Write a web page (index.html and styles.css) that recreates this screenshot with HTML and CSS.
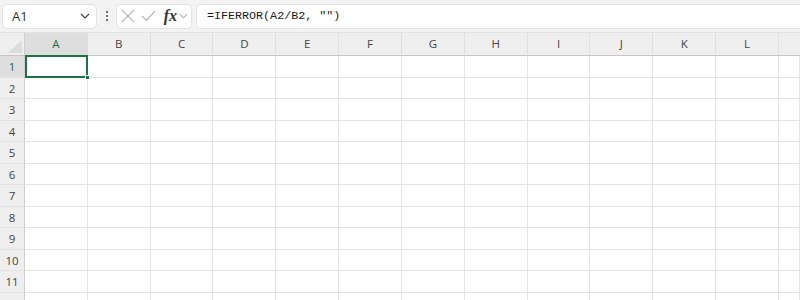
FILE: index.html
```html
<!DOCTYPE html>
<html lang="en">
<head>
    <meta charset="UTF-8">
    <title>Sheet</title>
    <link rel="stylesheet" href="styles.css">
</head>
<body>
    <div class="topbar">
        <div class="namebox">
            <span class="cellref">A1</span>
            <svg class="chev" width="10" height="6" viewBox="0 0 10 6"><path d="M1 1 L5 5 L9 1" fill="none" stroke="#444" stroke-width="1.2"/></svg>
        </div>
        <div class="dots"><i></i><i></i><i></i></div>
        <div class="fxbox">
            <svg width="14" height="14" viewBox="0 0 14 14"><path d="M1 1 L13 13 M13 1 L1 13" stroke="#b3b3b3" stroke-width="1.2"/></svg>
            <svg width="15" height="12" viewBox="0 0 15 12"><path d="M1 6 L5.5 10.5 L14 1" fill="none" stroke="#b3b3b3" stroke-width="1.2"/></svg>
            <span class="fx">fx</span>
            <svg class="chev" width="9" height="6" viewBox="0 0 10 6"><path d="M1 1 L5 5 L9 1" fill="none" stroke="#888" stroke-width="1.1"/></svg>
        </div>
        <div class="formula">=IFERROR(A2/B2, "")</div>
    </div>

    <div class="grid">
        <div class="corner"><span class="tri"></span></div>
        <div class="colhead sel">A</div>
        <div class="colhead">B</div>
        <div class="colhead">C</div>
        <div class="colhead">D</div>
        <div class="colhead">E</div>
        <div class="colhead">F</div>
        <div class="colhead">G</div>
        <div class="colhead">H</div>
        <div class="colhead">I</div>
        <div class="colhead">J</div>
        <div class="colhead">K</div>
        <div class="colhead">L</div>
        <div class="colhead last"></div>
    </div>
    <div class="rows" id="rows"></div>

    <script>
    var rows = document.getElementById("rows")
    for (var r = 1; r <= 12; r++) {
        var row = document.createElement("div")
        row.className = "grid row"
        var h = document.createElement("div")
        h.className = r == 1 ? "rowhead sel" : "rowhead"
        h.textContent = r
        row.appendChild(h)
        for (var c = 0; c < 13; c++) {
            var cell = document.createElement("div")
            cell.className = "cell"
            if (r == 1 && c == 0) {
                cell.className = "cell active"
                var handle = document.createElement("span")
                handle.className = "handle"
                cell.appendChild(handle)
            }
            row.appendChild(cell)
        }
        rows.appendChild(row)
    }
    </script>
</body>
</html>
```

FILE: styles.css
```css
*{
    margin: 0;
    padding: 0;
    box-sizing: border-box;
}
body{
    width: 800px;
    height: 300px;
    overflow: hidden;
    background: #fff;
    font-family: "Open Sans", "Noto Sans", sans-serif;
    color: #444;
}
.topbar{
    height: 33px;
    background: #f3f3f3;
    display: flex;
    align-items: center;
    padding: 0 0 0 2px;
    border-bottom: 1px solid #e2e2e2;
}
.namebox{
    width: 95px;
    height: 25px;
    background: #fff;
    border: 1px solid #e3e3e3;
    border-radius: 5px;
    display: flex;
    align-items: center;
    justify-content: space-between;
    padding: 0 6px 0 9px;
}
.cellref{
    font-size: 13px;
    color: #333;
}
.dots{
    width: 19px;
    display: flex;
    flex-direction: column;
    align-items: center;
    gap: 2px;
}
.dots i{
    width: 2px;
    height: 2px;
    background: #444;
    border-radius: 1px;
}
.fxbox{
    width: 76px;
    height: 25px;
    background: #fff;
    border: 1px solid #e3e3e3;
    border-radius: 5px;
    display: flex;
    align-items: center;
    gap: 6px;
    padding: 0 3px 0 4px;
}
.fx{
    font-family: "Liberation Serif", serif;
    font-style: italic;
    font-weight: bold;
    font-size: 16px;
    color: #333;
    margin-left: 2px;
}
.fxbox .chev{
    margin-left: -4px;
}
.formula{
    flex: 1;
    height: 25px;
    margin-left: 4px;
    background: #fff;
    border: 1px solid #e3e3e3;
    border-right: none;
    border-radius: 5px 0 0 5px;
    font-family: "Liberation Mono", monospace;
    font-size: 11.7px;
    color: #1a1a1a;
    line-height: 23px;
    padding-left: 10px;
}
.grid{
    display: grid;
    grid-template-columns: 25px repeat(12, 62.83px) 1fr;
}
.grid > div:first-child{
    border-right: 1px solid #cfcfcf;
}
.corner{
    height: 23px;
    background: #efefef;
    border-bottom: 1px solid #c6c6c6;
    position: relative;
}
.tri{
    position: absolute;
    right: 2px;
    bottom: 2px;
    width: 0;
    height: 0;
    border-left: 14px solid transparent;
    border-bottom: 13px solid #dcdcdc;
}
.colhead{
    height: 23px;
    background: #efefef;
    border-right: 1px solid #e0e0e0;
    border-bottom: 1px solid #c6c6c6;
    font-size: 11.5px;
    text-align: center;
    line-height: 22px;
    color: #444;
}
.colhead.last{
    border-right: none;
}
.colhead.sel{
    background: #dedede;
    color: #1e6b3e;
    border-bottom: 1px solid #b5b5b5;
}
.row > div{
    height: 21.5px;
    border-bottom: 1px solid #e3e3e3;
}
.rowhead{
    background: #efefef;
    font-size: 11.5px;
    text-align: center;
    line-height: 21px;
    color: #444;
}
.rowhead.sel{
    background: #dedede;
    color: #1e6b3e;
}
.cell{
    border-right: 1px solid #e3e3e3;
}
.cell.active{
    position: relative;
    border: 2px solid #1f7245;
    margin: -1px 0 0 0;
    height: 22.5px !important;
}
.handle{
    position: absolute;
    right: -4px;
    bottom: -4px;
    width: 5px;
    height: 5px;
    background: #1f7245;
    border: 1px solid #fff;
}
```
